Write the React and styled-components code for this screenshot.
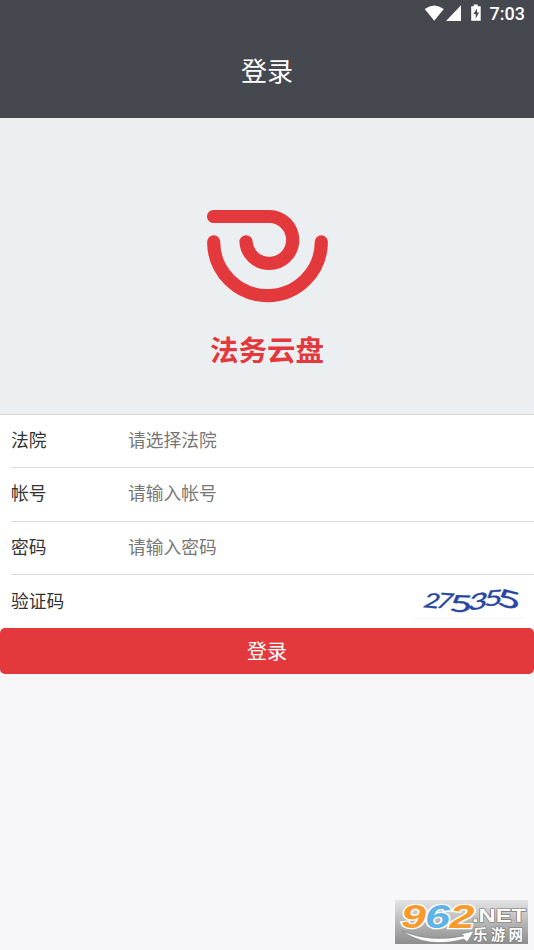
import React from 'react';
import styled, { createGlobalStyle } from 'styled-components';

const GlobalStyle = createGlobalStyle`
  * {
    box-sizing: border-box;
  }

  body {
    margin: 0;
    background: #f7f7fa;
    font-family: 'Roboto', 'Noto Sans CJK SC', sans-serif;
  }
`;

const Page = styled.div`
  display: flex;
  flex-direction: column;
  width: 100%;
  height: 950px;
  overflow: hidden;
`;

const Header = styled.header`
  height: 118px;
  flex: none;
  background: #46484f;
  color: #fff;
`;

const StatusBar = styled.div`
  display: flex;
  justify-content: flex-end;
  height: 27px;
  padding-right: 9px;
`;

const StatusIcons = styled.svg`
  width: 60px;
  height: 27px;
`;

const Clock = styled.span`
  margin-left: 6px;
  font-size: 18px;
  font-weight: 500;
  line-height: 28px;
`;

const Title = styled.h1`
  margin: 0;
  font-size: 26px;
  font-weight: 400;
  line-height: 38px;
  padding-top: 26px;
  text-align: center;
`;

const Banner = styled.section`
  display: flex;
  flex-direction: column;
  align-items: center;
  flex: none;
  height: 296px;
  padding-top: 91px;
  background: #ebeff2;
`;

const Logo = styled.svg`
  width: 122px;
  height: 94px;
  fill: none;
  stroke: #e4393c;
  stroke-width: 13.2;
  stroke-linecap: round;
`;

const Brand = styled.div`
  margin-top: 28px;
  color: #e4393c;
  font-size: 28.5px;
  font-weight: 700;
  line-height: 42px;
`;

const Form = styled.form`
  flex: none;
  height: 214px;
  padding-left: 11px;
  border-top: 1px solid #d5d7d9;
  background: #fff;
`;

const Field = styled.div`
  display: flex;
  align-items: center;
  height: 53.4px;
  padding-bottom: 0.4px;
  border-bottom: ${({ $last }) => ($last ? 'none' : '1px solid #dedede')};
`;

const Label = styled.label`
  width: 117px;
  color: #333;
  font-size: 17.75px;
  line-height: 26px;
`;

const Input = styled.input`
  flex: 1;
  min-width: 0;
  height: 40px;
  padding: 0;
  border: none;
  outline: none;
  background: transparent;
  color: #333;
  font-family: inherit;
  font-size: 17.75px;

  &::placeholder {
    color: #777;
    opacity: 1;
  }
`;

const Captcha = styled.svg`
  width: 110px;
  height: 38px;
  margin: 0 10px 4px 0;
  border-bottom: 1px solid #f6f6f6;
  fill: #2746a3;
  stroke: #2746a3;
  stroke-width: 0.35;
  font-family: 'Lato', sans-serif;
  font-size: 22px;
`;

const SubmitButton = styled.button`
  flex: none;
  width: 100%;
  height: 45.5px;
  padding: 0;
  border: none;
  border-radius: 5px;
  background: #e4393c;
  color: #fff;
  font-family: inherit;
  font-size: 20px;
  cursor: pointer;
`;

const Watermark = styled.svg`
  width: 133px;
  height: 44px;
  margin: auto 6px 6px auto;
  overflow: visible;
`;

const fields = [
  { id: 'court', label: '法院', placeholder: '请选择法院' },
  { id: 'account', label: '帐号', placeholder: '请输入帐号' },
  { id: 'password', label: '密码', placeholder: '请输入密码', type: 'password' },
];

const digits = [
  { char: '2', transform: 'translate(7 27) rotate(4) skewX(-14) scale(1.25 0.95)' },
  { char: '7', transform: 'translate(20 27.5) rotate(4) skewX(-16) scale(1.2 1)' },
  { char: '5', transform: 'translate(34 31) rotate(3) skewX(-4) scale(1.85 1.08)' },
  { char: '3', transform: 'translate(53 30.5) rotate(-8) skewX(-20) scale(1.55 1.02)' },
  { char: '5', transform: 'translate(70 26) rotate(-4) skewX(-12) scale(1.45 1)' },
  { char: '5', transform: 'translate(83 24.5) rotate(14) skewX(8) scale(1.95 1.1)' },
];

const App = () => {
  return (
    <>
      <GlobalStyle />
      <Page>
        <Header>
          <StatusBar>
            <StatusIcons viewBox="424 0 60 27" fill="#fff">
              <path d="M424.7 9Q434.2 1.8 443.8 9L434.2 20.7Z" />
              <path d="M461 5.2V21H446Z" />
              <path d="M473.7 4.5h4v1.8h3v14.5h-9.5V6.3h2.5z" />
              <path d="M477 8.5l-3.5 5.6h2.2v4.5l3.4-6h-2.1z" fill="#46484f" />
            </StatusIcons>
            <Clock>7:03</Clock>
          </StatusBar>
          <Title>登录</Title>
        </Header>
        <Banner>
          <Logo viewBox="206 209 122 94">
            <path d="M213.6 216.5H269.2A23.5 23.5 0 0 1 269.2 263.5A23.3 23.3 0 0 1 246 241.8" />
            <path d="M213.7 241.9A53.8 53.8 0 0 0 321.3 241.9" />
          </Logo>
          <Brand>法务云盘</Brand>
        </Banner>
        <Form id="login" onSubmit={(e) => e.preventDefault()}>
          {fields.map(({ id, label, placeholder, type }) => (
            <Field key={id}>
              <Label htmlFor={id}>{label}</Label>
              <Input id={id} name={id} type={type || 'text'} placeholder={placeholder} />
            </Field>
          ))}
          <Field $last>
            <Label htmlFor="code">验证码</Label>
            <Input id="code" name="code" />
            <Captcha viewBox="0 0 110 38">
              {digits.map(({ char, transform }, index) => (
                <text key={index} transform={transform}>{char}</text>
              ))}
            </Captcha>
          </Field>
        </Form>
        <SubmitButton type="submit" form="login">登录</SubmitButton>
        <Watermark viewBox="0 0 133 44">
          <defs>
            <linearGradient id="plate" x2="0" y2="1">
              <stop offset="0" stopColor="#e4e4e5" />
              <stop offset="0.5" stopColor="#b8b8b9" />
              <stop offset="1" stopColor="#8d8d8e" />
            </linearGradient>
          </defs>
          <rect width="133" height="44" fill="url(#plate)" />
          <path d="M7 31Q35 43 69 36L66 34L79 31L72 42L69 39Q33 49 7 31Z" fill="#fff" stroke="#777" strokeWidth="0.5" />
          <g
            fontFamily="Liberation Sans, sans-serif"
            fontSize="33"
            fontWeight="700"
            fontStyle="italic"
            stroke="#fff"
            strokeWidth="2.6"
            paintOrder="stroke"
          >
            <text x="6" y="27.5" fill="#f89a2c" textLength="25" lengthAdjust="spacingAndGlyphs">9</text>
            <text x="30" y="27.5" fill="#62b3e5" textLength="25" lengthAdjust="spacingAndGlyphs">6</text>
            <text x="54.5" y="27.5" fill="#f89a2c" textLength="25" lengthAdjust="spacingAndGlyphs">2</text>
          </g>
          <g fill="#fff" stroke="#777" strokeWidth="1.2" paintOrder="stroke" fontWeight="700">
            <text x="77" y="21.5" fontFamily="Liberation Sans, sans-serif" fontSize="18" textLength="54" lengthAdjust="spacingAndGlyphs">.NET</text>
            <text x="78" y="39.5" fontFamily="Noto Sans CJK SC, sans-serif" fontSize="14.5" textLength="50">乐游网</text>
          </g>
        </Watermark>
      </Page>
    </>
  );
};

export default App;
